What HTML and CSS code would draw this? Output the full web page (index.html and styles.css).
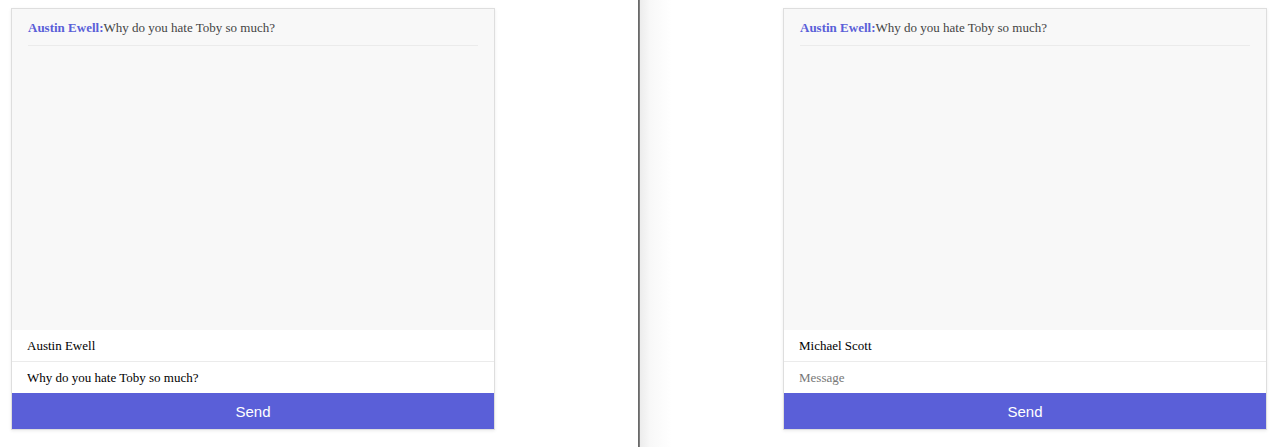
FILE: index.html
```html
<!DOCTYPE html>
<html lang="en">
<head>
    <meta charset="UTF-8">
    <meta name="viewport" content="width=device-width, initial-scale=1.0">
    <title>Chat</title>
    <link rel="stylesheet" href="styles.css">
</head>
<body>

    <div class="split">
        <div class="pane pane-left">
            <div class="chat">
                <div class="messages">
                    <div class="message"><span class="author">Austin Ewell:</span>Why do you hate Toby so much?</div>
                </div>
                <input type="text" class="field" value="Austin Ewell">
                <input type="text" class="field field-last" placeholder="Message" value="Why do you hate Toby so much?">
                <button class="send">Send</button>
            </div>
        </div>

        <div class="divider"></div>

        <div class="pane pane-right">
            <div class="chat">
                <div class="messages">
                    <div class="message"><span class="author">Austin Ewell:</span>Why do you hate Toby so much?</div>
                </div>
                <input type="text" class="field" value="Michael Scott">
                <input type="text" class="field field-last" placeholder="Message">
                <button class="send">Send</button>
            </div>
        </div>
    </div>

</body>
</html>
```

FILE: styles.css
```css
body {
    margin: 0;
    padding: 0;
    font-family: "Liberation Serif", "Times New Roman", serif;
    background: #ffffff;
}

.split {
    display: flex;
    height: 447px;
}

.pane {
    padding-top: 8px;
    box-sizing: border-box;
}

.pane-left {
    width: 638px;
    padding-left: 11px;
}

.divider {
    width: 2px;
    background: linear-gradient(to right, #5e5e5e, #8a8a8a);
}

.pane-right {
    flex: 1;
    padding-left: 143px;
    background: linear-gradient(to right, #ececec 0px, #f8f8f8 10px, #ffffff 32px);
}

.chat {
    width: 484px;
    display: flex;
    flex-direction: column;
    border: 1px solid #dedede;
    box-sizing: border-box;
    box-shadow: 0px 1px 3px rgba(0, 0, 0, 0.08);
    background-color: #ffffff;
}

.messages {
    height: 321px;
    padding: 0 16px;
    background-color: #f8f8f8;
    box-sizing: border-box;
}

.message {
    padding: 11px 0 10px;
    font-size: 13px;
    line-height: 15px;
    color: #444;
    border-bottom: 1px solid #ebebeb;
}

.author {
    color: #5a5fd8;
    font-weight: bold;
}

.field {
    height: 32px;
    padding: 0 15px;
    border: none;
    border-bottom: 1px solid #ebebeb;
    font-family: "Liberation Serif", "Times New Roman", serif;
    font-size: 13px;
    color: #000;
    box-sizing: border-box;
    outline: none;
    background: #ffffff;
}

.field-last {
    height: 31px;
    border-bottom: none;
}

.field::placeholder {
    color: #777;
}

.send {
    height: 36px;
    border: none;
    background-color: #5a5fd8;
    color: #ffffff;
    font-family: "Liberation Sans", Arial, sans-serif;
    font-size: 15px;
    cursor: pointer;
}
```
